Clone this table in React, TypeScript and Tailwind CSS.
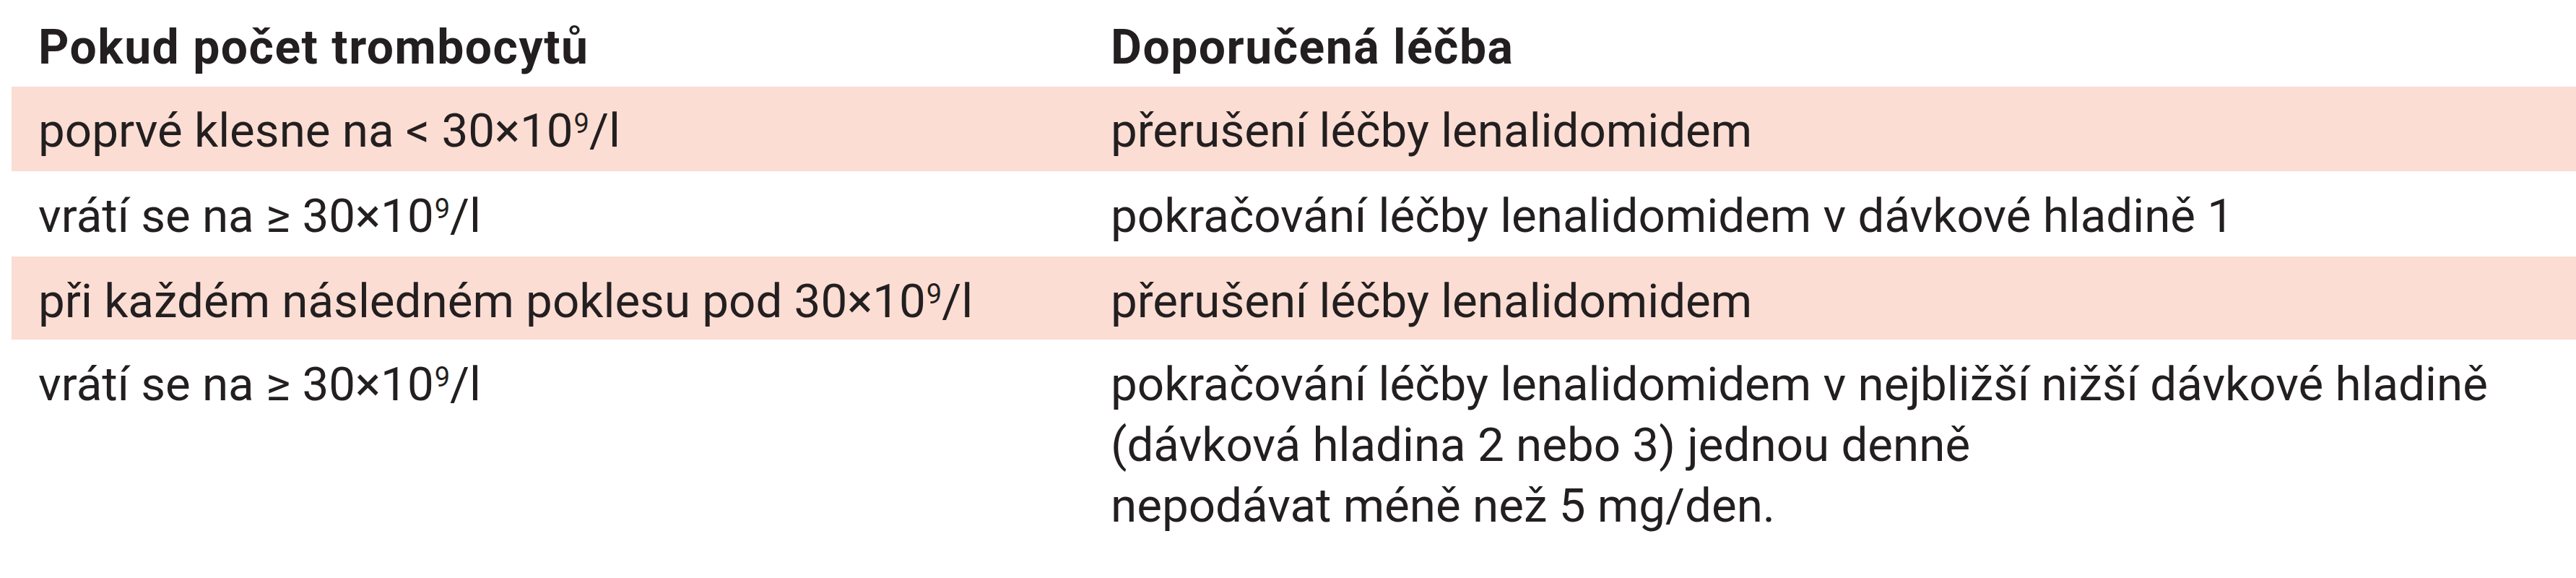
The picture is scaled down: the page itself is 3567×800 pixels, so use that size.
import type { ReactNode } from "react"

// Tabulka: úprava dávky lenalidomidu podle počtu trombocytů

function Sup({ children }: { children: ReactNode }) {
  return <sup className="text-[38px] top-[-19px] pl-[1px]">{children}</sup>
}

type Row = {
  left: ReactNode
  right: ReactNode
  pink: boolean
  box: string
}

const rows: Row[] = [
  {
    left: (
      <>
        poprvé klesne na &lt; 30×10<Sup>9</Sup>/l
      </>
    ),
    right: "přerušení léčby lenalidomidem",
    pink: true,
    box: "h-[117px] pt-[19px]",
  },
  {
    left: (
      <>
        vrátí se na ≥ 30×10<Sup>9</Sup>/l
      </>
    ),
    right: "pokračování léčby lenalidomidem v dávkové hladině 1",
    pink: false,
    box: "h-[118px] pt-[20px]",
  },
  {
    left: (
      <>
        při každém následném poklesu pod 30×10<Sup>9</Sup>/l
      </>
    ),
    right: "přerušení léčby lenalidomidem",
    pink: true,
    box: "h-[115px] pt-[20px]",
  },
  {
    left: (
      <>
        vrátí se na ≥ 30×10<Sup>9</Sup>/l
      </>
    ),
    right: (
      <>
        pokračování léčby lenalidomidem v nejbližší nižší dávkové hladině
        <br />
        (dávková hladina 2 nebo 3) jednou denně
        <br />
        nepodávat méně než 5 mg/den.
      </>
    ),
    pink: false,
    box: "pt-[20px]",
  },
]

export default function App() {
  return (
    <div className="h-[800px] w-full bg-white pl-[16px] text-[#231f20] font-['Roboto','Liberation_Sans',sans-serif]">
      <div className="grid h-[120px] grid-cols-[1485px_1fr] pt-[24px] text-[66px] leading-[84px] font-bold tracking-[1.5px]">
        <div className="pl-[37px]">Pokud počet trombocytů</div>
        <div className="pl-[37px]">Doporučená léčba</div>
      </div>

      {rows.map((row, i) => (
        <div
          key={i}
          className={`grid grid-cols-[1485px_1fr] text-[65.5px] leading-[84px] ${row.box} ${
            row.pink ? "bg-[#fbddd3]" : "bg-white"
          }`}
        >
          <div className="pl-[37px] whitespace-nowrap">{row.left}</div>
          <div className="pl-[37px] whitespace-nowrap">{row.right}</div>
        </div>
      ))}
    </div>
  )
}
